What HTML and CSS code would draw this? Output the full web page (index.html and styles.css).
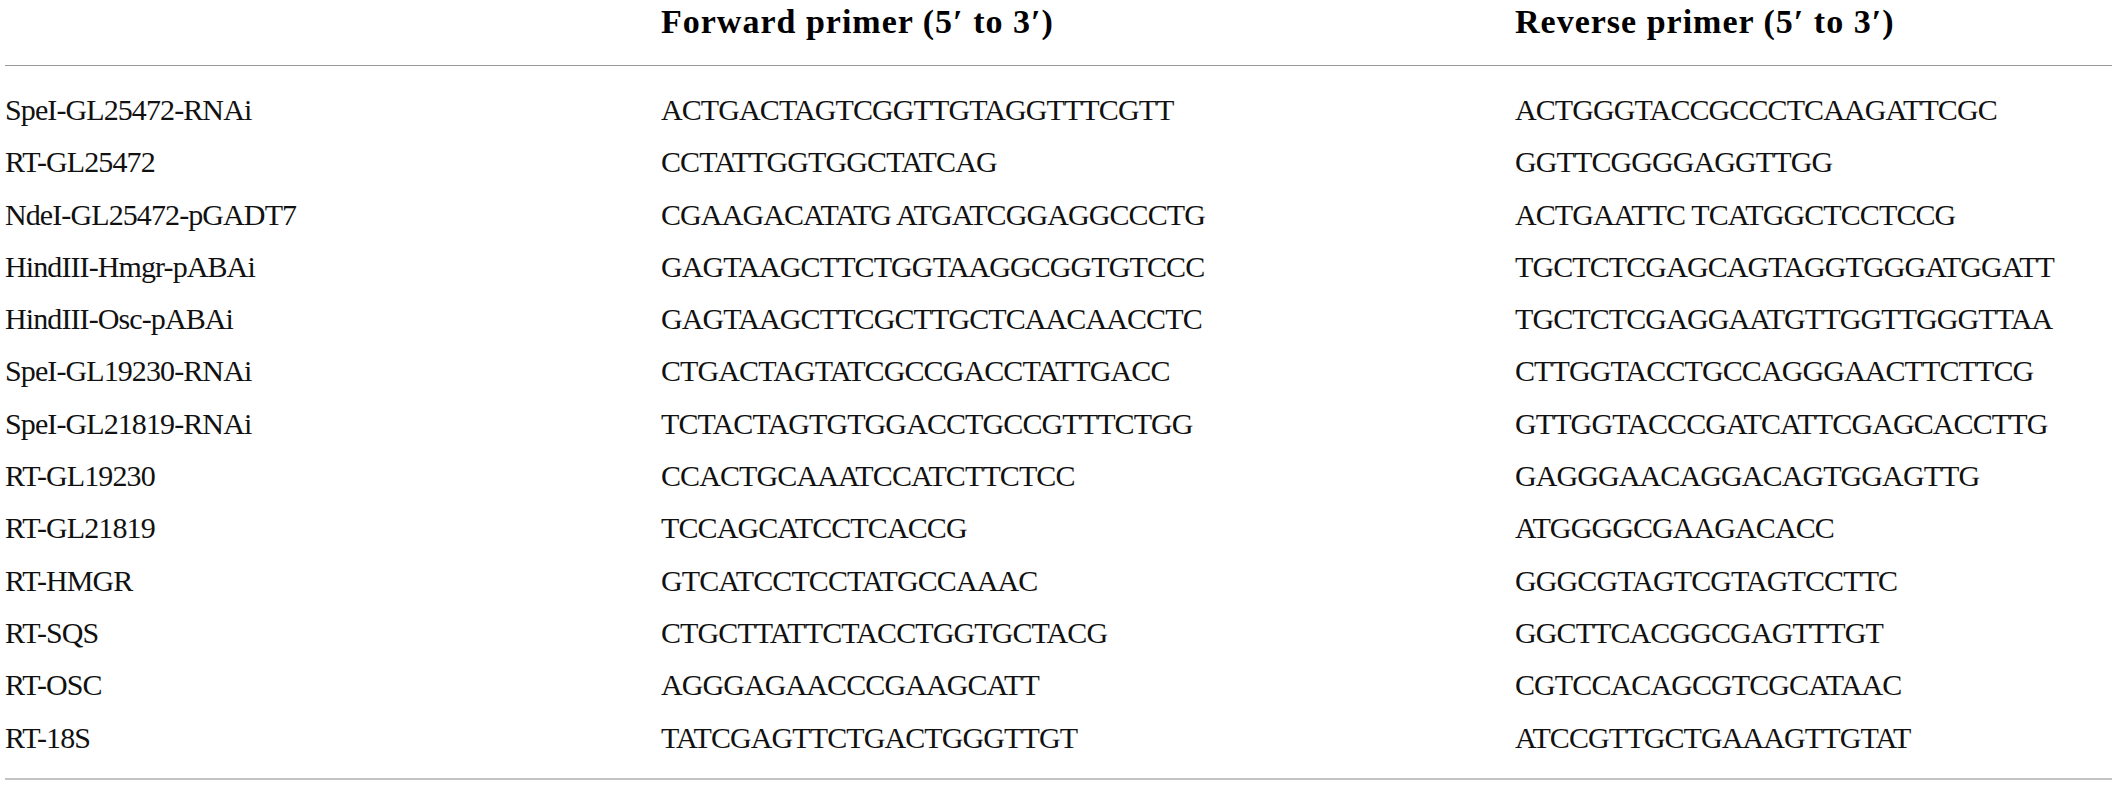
FILE: index.html
```html
<!DOCTYPE html>
<html lang="en">
<head>
<meta charset="utf-8">
<title>Primers</title>
<link rel="stylesheet" href="styles.css">
</head>
<body>
<table class="primers">
  <colgroup>
    <col class="c-name">
    <col class="c-fwd">
    <col class="c-rev">
  </colgroup>
  <thead>
    <tr>
      <th></th>
      <th>Forward primer (5′ to 3′)</th>
      <th>Reverse primer (5′ to 3′)</th>
    </tr>
  </thead>
  <tbody>
    <tr class="first"><td>SpeI-GL25472-RNAi</td><td>ACTGACTAGTCGGTTGTAGGTTTCGTT</td><td>ACTGGGTACCGCCCTCAAGATTCGC</td></tr>
    <tr><td>RT-GL25472</td><td>CCTATTGGTGGCTATCAG</td><td>GGTTCGGGGAGGTTGG</td></tr>
    <tr><td>NdeI-GL25472-pGADT7</td><td>CGAAGACATATG ATGATCGGAGGCCCTG</td><td>ACTGAATTC TCATGGCTCCTCCG</td></tr>
    <tr><td>HindIII-Hmgr-pABAi</td><td>GAGTAAGCTTCTGGTAAGGCGGTGTCCC</td><td>TGCTCTCGAGCAGTAGGTGGGATGGATT</td></tr>
    <tr><td>HindIII-Osc-pABAi</td><td>GAGTAAGCTTCGCTTGCTCAACAACCTC</td><td>TGCTCTCGAGGAATGTTGGTTGGGTTAA</td></tr>
    <tr><td>SpeI-GL19230-RNAi</td><td>CTGACTAGTATCGCCGACCTATTGACC</td><td>CTTGGTACCTGCCAGGGAACTTCTTCG</td></tr>
    <tr><td>SpeI-GL21819-RNAi</td><td>TCTACTAGTGTGGACCTGCCGTTTCTGG</td><td>GTTGGTACCCGATCATTCGAGCACCTTG</td></tr>
    <tr><td>RT-GL19230</td><td>CCACTGCAAATCCATCTTCTCC</td><td>GAGGGAACAGGACAGTGGAGTTG</td></tr>
    <tr><td>RT-GL21819</td><td>TCCAGCATCCTCACCG</td><td>ATGGGGCGAAGACACC</td></tr>
    <tr><td>RT-HMGR</td><td>GTCATCCTCCTATGCCAAAC</td><td>GGGCGTAGTCGTAGTCCTTC</td></tr>
    <tr><td>RT-SQS</td><td>CTGCTTATTCTACCTGGTGCTACG</td><td>GGCTTCACGGCGAGTTTGT</td></tr>
    <tr><td>RT-OSC</td><td>AGGGAGAACCCGAAGCATT</td><td>CGTCCACAGCGTCGCATAAC</td></tr>
    <tr class="last"><td>RT-18S</td><td>TATCGAGTTCTGACTGGGTTGT</td><td>ATCCGTTGCTGAAAGTTGTAT</td></tr>
  </tbody>
</table>
</body>
</html>
```
FILE: styles.css
```css
html, body {
  margin: 0;
  padding: 0;
  background: #ffffff;
}

body {
  font-family: "Liberation Serif", "Times New Roman", serif;
  color: #111111;
}

.primers {
  margin: 0 5px;
  width: 2107px;
  border-collapse: collapse;
  table-layout: fixed;
  border-bottom: 2px solid #c4c4c4;
}

.c-name { width: 656px; }
.c-fwd { width: 854px; }
.c-rev { width: auto; }

.primers th {
  text-align: left;
  font-weight: bold;
  font-size: 34px;
  letter-spacing: 1px;
  line-height: 40px;
  padding: 2px 0 23px 0;
  border-bottom: 1px solid #9a9a9a;
  white-space: nowrap;
  color: #000000;
}

.primers td {
  font-size: 30px;
  letter-spacing: -0.9px;
  line-height: 52.3px;
  padding: 0;
  white-space: nowrap;
  vertical-align: top;
}

.primers tr.first td {
  padding-top: 18px;
}

.primers tr.last td {
  padding-bottom: 14px;
}
```
